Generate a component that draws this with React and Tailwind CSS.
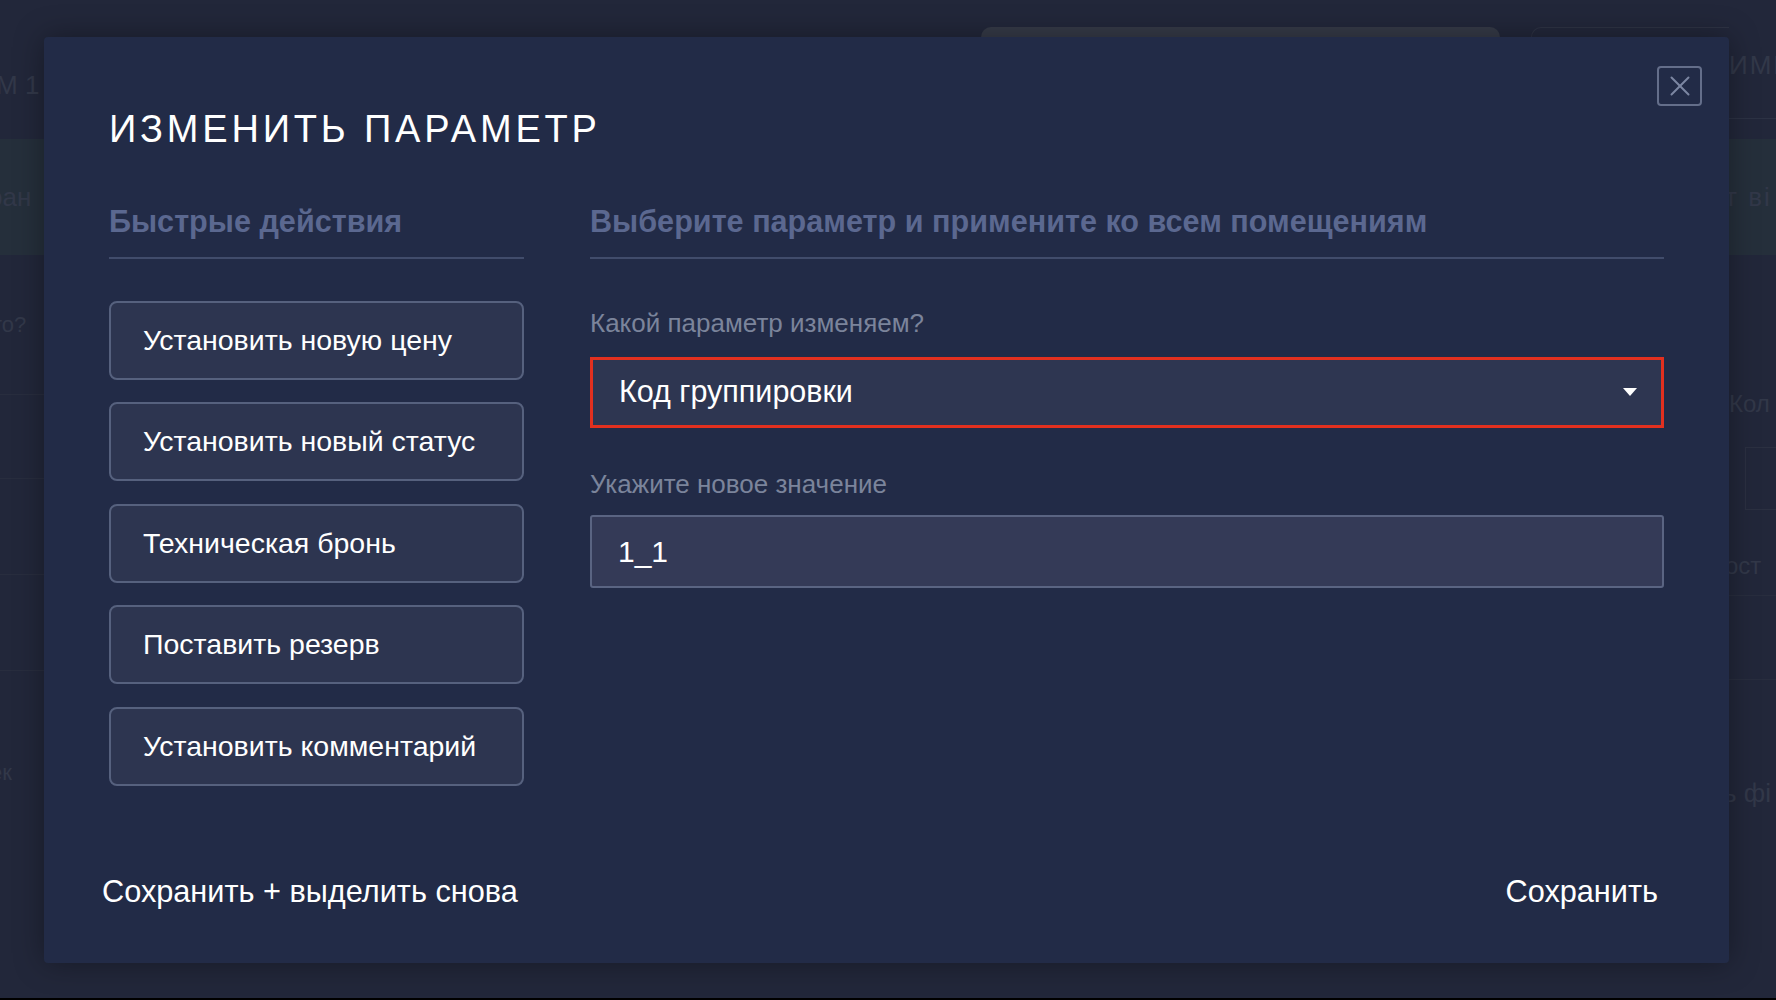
import { X } from 'lucide-react'

const font = { fontFamily: '"Liberation Sans", Arial, sans-serif' }

const quickActions = [
  'Установить новую цену',
  'Установить новый статус',
  'Техническая бронь',
  'Поставить резерв',
  'Установить комментарий',
]

// dim page that sits behind the modal overlay, only its edges show
const BackgroundPage = () => {
  return (
    <div className="flex h-screen w-full overflow-hidden bg-[#22273a] text-[26px] text-[#323849]">
      <div className="flex w-[60px] shrink-0 flex-col overflow-hidden">
        <div className="h-[37px] shrink-0" />
        <div className="flex h-[96px] shrink-0 items-center">
          <span className="-ml-[4px] whitespace-nowrap">М 1</span>
        </div>
        <div className="h-[6px] shrink-0" />
        <div className="flex h-[116px] shrink-0 items-center bg-[#252f3b]">
          <span className="-ml-[12px] whitespace-nowrap">ран</span>
        </div>
        <div className="flex h-[140px] shrink-0 items-center border-b border-[#282d3e]">
          <span className="-ml-[8px] whitespace-nowrap text-[22px]">то?</span>
        </div>
        <div className="h-[84px] shrink-0 border-b border-[#282d3e]" />
        <div className="h-[96px] shrink-0 border-b border-[#282d3e]" />
        <div className="h-[96px] shrink-0 border-b border-[#282d3e]" />
        <div className="h-[52px] shrink-0" />
        <div className="flex h-[98px] shrink-0 items-center">
          <span className="-ml-[10px] whitespace-nowrap text-[22px]">ек</span>
        </div>
      </div>

      <div className="flex flex-1 flex-col">
        <div className="flex h-[37px] shrink-0 items-end">
          <div className="ml-[921px] h-[10px] w-[519px] rounded-t-[18px] bg-[#353a47]" />
          <div className="ml-[31px] h-[10px] flex-1 rounded-tl-[18px] border-l border-t border-[#2e3344]" />
        </div>
      </div>

      <div className="flex w-[47px] shrink-0 flex-col overflow-hidden">
        <div className="h-[37px] shrink-0" />
        <div className="flex h-[56px] shrink-0 items-center">
          <span className="whitespace-nowrap tracking-[2px]">ИМП</span>
        </div>
        <div className="h-[26px] shrink-0 border-b border-[#2c3244]" />
        <div className="h-[20px] shrink-0" />
        <div className="flex h-[116px] shrink-0 items-center bg-[#252f3b]">
          <span className="-ml-[4px] whitespace-nowrap tracking-[2px]">т ві</span>
        </div>
        <div className="h-[121px] shrink-0" />
        <div className="flex h-[56px] shrink-0 items-center">
          <span className="whitespace-nowrap text-[24px]">Кол</span>
        </div>
        <div className="h-[15px] shrink-0" />
        <div className="ml-[16px] h-[63px] shrink-0 border-b border-l border-t border-[#2b3041]" />
        <div className="h-[26px] shrink-0" />
        <div className="flex h-[60px] shrink-0 items-center border-b border-[#282d3e]">
          <span className="-ml-[4px] whitespace-nowrap text-[24px]">ост</span>
        </div>
        <div className="h-[84px] shrink-0 border-b border-[#282d3e]" />
        <div className="h-[83px] shrink-0" />
        <div className="flex h-[60px] shrink-0 items-center">
          <span className="-ml-[6px] whitespace-nowrap">ь фі</span>
        </div>
      </div>
    </div>
  )
}

const ChangeParamModal = () => {
  return (
    <div
      className="absolute left-[44px] top-[37px] flex h-[926px] w-[1685px] flex-col rounded-[4px] bg-[#222b47] shadow-[0_0_30px_rgba(0,0,0,0.35)]"
      style={font}
    >
      <button className="absolute right-[27px] top-[29px] flex h-[40px] w-[45px] items-center justify-center rounded-[4px] border-2 border-[#646e8a] text-[#7c86a2]">
        <X size={34} strokeWidth={1.4} />
      </button>

      <div className="px-[65px] pt-[73px]">
        <h1 className="text-[38px] leading-none tracking-[3.8px] text-white">ИЗМЕНИТЬ ПАРАМЕТР</h1>

        <div className="mt-[58px] flex gap-[66px]">
          {/* quick actions */}
          <div className="flex w-[415px] shrink-0 flex-col">
            <div className="border-b-2 border-[#414c6b] pb-[20px] text-[30.6px] font-bold leading-none text-[#5b6890]">
              Быстрые действия
            </div>
            <div className="mt-[42px] flex flex-col gap-[22.5px]">
              {quickActions.map((label) => (
                <button
                  key={label}
                  className="flex h-[79px] items-center rounded-[8px] border-2 border-[#56617e] bg-[#2d3550] px-[32px] text-left text-[28.5px] text-white"
                >
                  {label}
                </button>
              ))}
            </div>
          </div>

          {/* parameter editor */}
          <div className="flex flex-1 flex-col">
            <div className="border-b-2 border-[#414c6b] pb-[20px] text-[30.6px] font-bold leading-none text-[#5b6890]">
              Выберите параметр и примените ко всем помещениям
            </div>

            <label className="mt-[51px] text-[26px] leading-none text-[#7b849b]">Какой параметр изменяем?</label>
            <div className="mt-[21px] flex h-[71px] items-center justify-between border-[3px] border-[#e2301f] bg-[#2e3651] pl-[26px] pr-[24px]">
              <span className="text-[30.5px] text-white">Код группировки</span>
              <svg width="14" height="8" viewBox="0 0 14 8">
                <path d="M0 0 H14 L7 8 Z" fill="#ffffff" />
              </svg>
            </div>

            <label className="mt-[43px] text-[26px] leading-none text-[#7b849b]">Укажите новое значение</label>
            <div className="mt-[18px] flex h-[73px] items-center rounded-[3px] border-2 border-[#5a6482] bg-[#343a57] px-[26px]">
              <span className="text-[30px] text-white">1_1</span>
            </div>
          </div>
        </div>
      </div>

      <div className="flex-1" />

      <div className="flex items-center justify-between pb-[55px] pl-[58px] pr-[71px] text-[30.7px] leading-none text-white">
        <button>Сохранить + выделить снова</button>
        <button>Сохранить</button>
      </div>
    </div>
  )
}

const App = () => {
  return (
    <div className="relative h-screen w-full overflow-hidden" style={font}>
      <BackgroundPage />
      <ChangeParamModal />
      <div className="absolute bottom-0 left-0 h-[2px] w-full bg-black" />
    </div>
  )
}

export default App
